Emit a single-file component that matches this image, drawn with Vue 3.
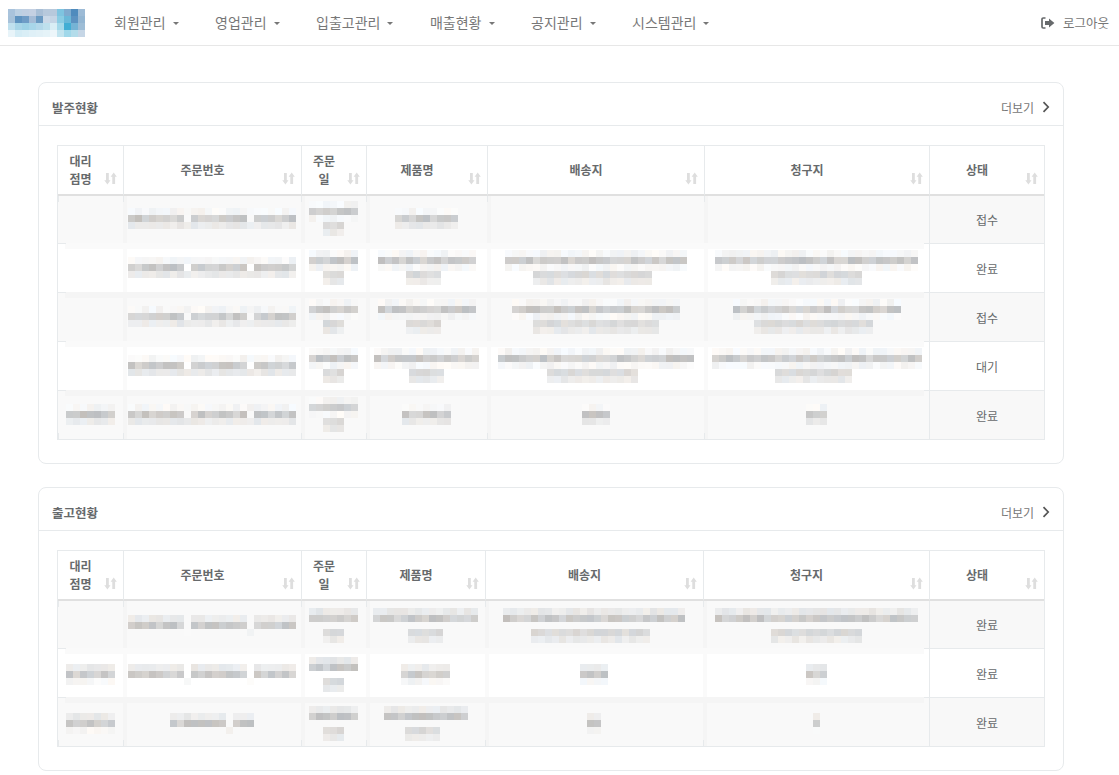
<template>
  <div class="page">
    <nav class="topbar">
      <svg class="logo" width="77" height="28" shape-rendering="crispEdges">
        <template v-for="(row, y) in logo" :key="y">
          <rect v-for="(c, x) in row" :key="x" :x="x * 7" :y="y * 7" width="7" height="7" :fill="c" />
        </template>
      </svg>
      <ul class="menu">
        <li v-for="m in menus" :key="m">{{ m }}<span class="caret"></span></li>
      </ul>
      <a class="logout">
        <svg width="14" height="12" viewBox="0 0 14 12">
          <path d="M4.500 1H2.200C1.500 1 1 1.500 1 2.200v7.600C1 10.500 1.500 11 2.200 11h2.300" fill="none" stroke="#676a6c" stroke-width="1.700" />
          <path d="M8 1.600 13.400 6 8 10.400V8H4V4h4z" fill="#676a6c" />
        </svg>
        로그아웃
      </a>
    </nav>

    <main class="content">
      <section v-for="card in cards" :key="card.title" class="card">
        <header class="card-head">
          <h2>{{ card.title }}</h2>
          <a class="more">더보기
            <svg width="8" height="12" viewBox="0 0 8 12"><path d="M1.500 1.200 6.200 6l-4.700 4.800" fill="none" stroke="#555" stroke-width="1.700" /></svg>
          </a>
        </header>
        <div class="card-body">
          <table>
            <colgroup>
              <col v-for="(w, i) in card.cols" :key="i" :style="{ width: w + 'px' }" />
            </colgroup>
            <thead>
              <tr>
                <th v-for="h in heads" :key="h">
                  {{ h }}
                  <svg class="sort" width="13" height="13" viewBox="0 0 13 13">
                    <path d="M2 1h2.800v7.200h1.700L3.400 12.400.3 8.200H2zM8.300 12h2.800V4.800h1.700L9.700.6l-3.100 4.200h1.700z" fill="#dedede" />
                  </svg>
                </th>
              </tr>
            </thead>
            <tbody>
              <tr v-for="(row, r) in card.rows" :key="r" :class="{ odd: r % 2 === 0, first: r === 0, last: r === card.rows.length - 1 }">
                <td v-for="(cell, c) in row.cells" :key="c" class="blur" :style="{ paddingTop: (r === 0 ? card.top - 2 : card.top) + 'px' }">
                  <svg v-if="cell.length" :width="blobW(cell)" :height="cell.length * 7" shape-rendering="crispEdges" class="blob">
                    <template v-for="(b, i) in blobRects(cell, card.title + r + c)" :key="i">
                      <rect :x="b.x" :y="b.y" width="7" height="7" :fill="b.fill" />
                    </template>
                  </svg>
                </td>
                <td class="status">{{ row.status }}</td>
              </tr>
            </tbody>
          </table>
        </div>
      </section>
    </main>
  </div>
</template>

<script setup>
const menus = ['회원관리', '영업관리', '입출고관리', '매출현황', '공지관리', '시스템관리']
const heads = ['대리점명', '주문번호', '주문일', '제품명', '배송지', '청구지', '상태']

const logo = [
  ['#a9c3dc', '#bcd0e3', '#c0cfe2', '#c4d0e2', '#a9bfd6', '#b7c9dc', '#b7c9dc', '#7ec4e0', '#7fabcf', '#4f8bbd', '#9dbbd6'],
  ['#a7c2da', '#5f93c0', '#6f9cc6', '#a5bcd6', '#6a9ac2', '#cbd9e8', '#c5d5e5', '#8acce3', '#6ab8d8', '#5c92c1', '#94b6d2'],
  ['#c0e0ee', '#a8d5e8', '#9ed2e6', '#a8d6e9', '#b3d8ea', '#bee0ed', '#d9eef5', '#a5d9ea', '#42aed4', '#75b3d5', '#9ebdd6'],
  ['#e8f4f9', '#d4ecf5', '#d9eef6', '#dff0f7', '#e2f1f7', '#e5f3f8', '#edf6fa', '#c2e4ef', '#a0d8ea', '#b3dcea', '#c6d6e6']
]

// 가려진 셀: [칸 수, 농도, 뺄 칸, 남길 칸] 줄 목록
const a1 = (n, gaps) => [[0], [n, 'f'], [n, 'd', gaps], [n, 'l']]
const a2 = (n, m) => [[n, 'f'], [n, 'd'], [n, 'f'], [m, 'm'], [m, 'l']]
const b1 = n => [[0], [n, 'l'], [n, 'd'], [n, 'f']]
const b2 = (n, m) => [[n, 'l'], [n, 'd'], [0], [m, 'm'], [m, 'l']]
// 주문번호: 구분자 자리만 비고 아래로 한 칸 내려옴
const ord = (n, gaps) => [[0], [n, 'l', gaps], [n, 'd', gaps], [n, 'f', null, gaps]]
const no1 = [8, 17]

const cards = [
  {
    title: '발주현황',
    top: 7,
    cols: [65, 178, 65, 121, 217, 225, 115],
    rows: [
      { cells: [[], a1(24, no1), a2(7, 3), a1(9), [], []], status: '접수' },
      { cells: [[], a1(24, no1), a2(7, 3), a2(14, 5), a2(26, 17), a2(29, 13)], status: '완료' },
      { cells: [[], a1(24, no1), a2(7, 3), a2(14, 5), a2(24, 18), a2(24, 17)], status: '접수' },
      { cells: [[], a1(24, no1), a2(7, 3), a2(15, 5), a2(28, 13), a2(30, 11)], status: '대기' },
      { cells: [a1(7), a1(24, no1), a2(7, 3), a1(7), a1(4), a1(3)], status: '완료' }
    ]
  },
  {
    title: '출고현황',
    top: 9,
    cols: [65, 178, 65, 119, 218, 226, 115],
    rows: [
      { cells: [[], ord(24, no1), b2(7, 3), b2(15, 5), b2(26, 17), b2(29, 13)], status: '완료' },
      { cells: [b1(7), ord(24, no1), b2(7, 3), b1(7), b1(4), b1(3)], status: '완료' },
      { cells: [b1(7), ord(12, [8]), b2(7, 3), b2(12, 5), b1(2), b1(1)], status: '완료' }
    ]
  }
]

const blobW = cell => Math.max(...cell.map(l => l[0])) * 7

// 셀마다 항상 같은 모자이크가 나오도록 시드 고정
function blobRects(cell, seedText) {
  let seed = 7
  for (const ch of seedText) seed = (seed * 31 + ch.charCodeAt(0)) >>> 0
  const rnd = () => {
    seed = (seed * 1664525 + 1013904223) >>> 0
    return seed / 4294967296
  }
  const base = { f: 246, l: 234, m: 218, d: 204 }
  const maxW = Math.max(...cell.map(l => l[0]))
  const out = []
  cell.forEach(([n, lv, gaps, only], y) => {
    if (!n) return
    const off = Math.floor((maxW - n) / 2)
    for (let i = 0; i < n; i++) {
      if (gaps && gaps.includes(i)) continue
      if (only && !only.includes(i)) continue
      const v = base[lv] + (rnd() - 0.5) * (lv === 'd' ? 26 : 12)
      const t = (rnd() - 0.5) * 8
      const r = Math.round(v + t)
      const b = Math.round(v - t)
      out.push({ x: (off + i) * 7, y: y * 7, fill: `rgb(${r},${Math.round(v)},${b})` })
    }
  })
  return out
}
</script>

<style scoped>
.page {
  width: 1119px;
  height: 775px;
  overflow: hidden;
  background: #fff;
  font-family: "Noto Sans CJK KR", "Liberation Sans", sans-serif;
  color: #676a6c;
}
.topbar {
  height: 46px;
  box-sizing: border-box;
  display: flex;
  align-items: center;
  border-bottom: 1px solid #e7e7e7;
  padding: 0 10px 0 8px;
}
.logo {
  display: block;
  flex: none;
}
.menu {
  display: flex;
  list-style: none;
  margin: 0 auto 0 10.750px;
  padding: 0 0 2px;
}
.menu li {
  padding: 0 18.250px;
  font-size: 14px;
  color: #777;
  white-space: nowrap;
}
.caret {
  display: inline-block;
  margin-left: 7px;
  vertical-align: middle;
  border-top: 3px solid #777;
  border-left: 3px solid transparent;
  border-right: 3px solid transparent;
}
.logout {
  display: flex;
  align-items: center;
  gap: 8px;
  font-size: 12.500px;
  color: #777;
}
.content {
  padding: 36px 55px 0 38px;
}
.card {
  border: 1px solid #e7eaec;
  border-radius: 8px;
  margin-bottom: 23px;
}
.card-head {
  height: 43px;
  display: flex;
  align-items: center;
  justify-content: space-between;
  padding: 6px 13px 0;
  box-sizing: border-box;
  border-bottom: 1px solid #e7eaec;
}
.card-head h2 {
  margin: 0;
  font-size: 12.500px;
  font-weight: 700;
  color: #676a6c;
}
.more {
  display: flex;
  align-items: center;
  gap: 8px;
  font-size: 12px;
  color: #777;
}
.card-body {
  padding: 19px 18px 23px;
}
table {
  width: 988px;
  box-sizing: border-box;
  table-layout: fixed;
  border-collapse: separate;
  border-spacing: 0;
  font-size: 12px;
  border: 1px solid #e7eaec;
}
th {
  position: relative;
  height: 50px;
  box-sizing: border-box;
  padding: 5px 28px 5px 8px;
  font-weight: 700;
  line-height: 18px;
  text-align: center;
  word-break: break-all;
  border-left: 1px solid #e7eaec;
  border-bottom: 2px solid #e0e0e0;
}
th:first-child {
  border-left: 0;
}
.sort {
  position: absolute;
  right: 6px;
  bottom: 9px;
}
td {
  height: 49px;
  box-sizing: border-box;
  padding: 0;
  text-align: center;
  vertical-align: top;
}
tr.first td {
  height: 47px;
}
.blob {
  display: block;
  margin: 0 auto;
}
tbody tr {
  --band: #fafafa;
  --line: #e7eaec;
}
tbody tr.odd {
  --band: #f5f5f5;
}
tr.odd td {
  background-color: #f9f9f9;
}
/* 가림 처리로 번진 경계선: 위/왼쪽 띠와 남은 눈금 */
td.blur {
  background-image:
    linear-gradient(var(--line), var(--line)),
    linear-gradient(var(--line), var(--line)),
    linear-gradient(var(--line), var(--line)),
    linear-gradient(var(--line), var(--line)),
    linear-gradient(var(--band), var(--band)),
    linear-gradient(var(--band), var(--band));
  background-size:
    var(--hl, 0) 1px,
    var(--hr, 0) 1px,
    1px var(--vt, 0),
    1px var(--vb, 0),
    var(--bt, 100%) var(--bh, 6px),
    var(--bw, 6px) 100%;
  background-position:
    left top,
    right top,
    left top,
    left bottom,
    var(--bp, left) top,
    -2px top;
  background-repeat: no-repeat;
}
tr.first td.blur {
  --vt: 6px;
  --bh: 0px;
  --hl: 0px;
  --hr: 0px;
}
tr.last td.blur {
  --vb: 6px;
}
td.blur:first-child {
  --hl: 8px;
  --bt: calc(100% - 7px);
  --bp: right;
  --bw: 0px;
  --vt: 0px;
  --vb: 0px;
}
td.blur:nth-last-child(2) {
  --hr: 5px;
  --bt: calc(100% - 5px);
}
tr.first td.blur:first-child,
tr.first td.blur:nth-last-child(2) {
  --hl: 0px;
  --hr: 0px;
}
.status {
  vertical-align: middle;
  border-left: 1px solid #e7eaec;
  border-top: 1px solid #e7eaec;
}
tr.odd .status {
  background-color: #f8f8f8;
}
tr.first .status {
  border-top: 0;
}
</style>

<style>
html, body {
  margin: 0;
  overflow: hidden;
}
</style>
